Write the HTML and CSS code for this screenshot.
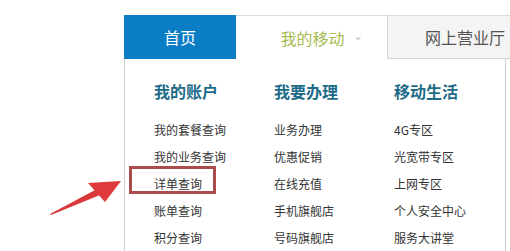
FILE: index.html
```html
<!DOCTYPE html>
<html lang="zh-CN">
<head>
  <meta charset="UTF-8" />
  <title>中国移动 - 我的移动</title>
  <link rel="stylesheet" href="styles.css">
</head>
<body>
  <div class="nav">
    <!-- Tabs -->
    <div class="tabs">
      <a class="tab tab-home" href="#">首页</a>
      <a class="tab tab-mine" href="#">我的移动 <span class="caret">&#8964;</span></a>
      <a class="tab tab-hall" href="#">网上营业厅</a>
    </div>

    <!-- Dropdown -->
    <div class="dropdown">
      <div class="col">
        <h3>我的账户</h3>
        <a href="#">我的套餐查询</a>
        <a href="#">我的业务查询</a>
        <a href="#" class="marked">详单查询</a>
        <a href="#">账单查询</a>
        <a href="#">积分查询</a>
      </div>
      <div class="col">
        <h3>我要办理</h3>
        <a href="#">业务办理</a>
        <a href="#">优惠促销</a>
        <a href="#">在线充值</a>
        <a href="#">手机旗舰店</a>
        <a href="#">号码旗舰店</a>
      </div>
      <div class="col">
        <h3>移动生活</h3>
        <a href="#">4G专区</a>
        <a href="#">光宽带专区</a>
        <a href="#">上网专区</a>
        <a href="#">个人安全中心</a>
        <a href="#">服务大讲堂</a>
      </div>
    </div>
  </div>

  <!-- annotation arrow -->
  <svg class="arrow" width="130" height="230" viewBox="0 0 130 230">
    <polygon points="50,214 97,189 100,195 51,215" fill="#d9393b" />
    <polygon points="121,181 88,183 105,202" fill="#e0393b" />
  </svg>
</body>
</html>
```

FILE: styles.css
```css
body {
  margin: 0;
  background: #fff;
  font-family: "Noto Sans CJK SC", "Microsoft YaHei", sans-serif;
  overflow: hidden;
}

a {
  text-decoration: none;
}

/* Tabs */
.nav {
  margin: 15px 0 0 124px;
  width: 386px;
}
.tabs {
  display: flex;
  height: 44px;
}
.tab {
  display: flex;
  align-items: center;
  justify-content: center;
  font-size: 16px;
  box-sizing: border-box;
  white-space: nowrap;
}
.tab-home {
  width: 112px;
  background: #0b7dc5;
  color: #fff;
}
.tab-mine {
  width: 151px;
  color: #a7bb55;
  border-top: 1px solid #dcdcdc;
  gap: 8px;
  padding-left: 20px;
}
.tab-mine .caret {
  color: #c4c4c4;
  font-size: 12px;
  margin-top: -6px;
}
.tab-hall {
  flex: 1;
  background: #f4f4f4;
  color: #555;
  border-top: 1px solid #dcdcdc;
  border-left: 1px solid #d4d4d4;
  border-bottom: 1px solid #d4d4d4;
  justify-content: flex-start;
  padding-left: 37px;
  overflow: hidden;
}

/* Dropdown */
.dropdown {
  width: 382px;
  height: 200px;
  box-sizing: border-box;
  border-left: 1px solid #cfcfcf;
  border-right: 1px solid #cfcfcf;
  padding: 22px 0 0 29px;
  display: grid;
  grid-template-columns: 120px 120px 120px;
}
.col h3 {
  margin: 0 0 15px;
  font-size: 16px;
  line-height: 20px;
  font-weight: bold;
  color: #1d6b88;
}
.col a {
  display: block;
  font-size: 12px;
  line-height: 27px;
  color: #333;
  white-space: nowrap;
}
.col a.marked {
  position: relative;
}
.col a.marked::after {
  content: "";
  position: absolute;
  left: -25px;
  top: -4px;
  width: 81px;
  height: 22px;
  border: 3px solid #ad4a4c;
}

.arrow {
  position: absolute;
  left: 0;
  top: 0;
}
```
